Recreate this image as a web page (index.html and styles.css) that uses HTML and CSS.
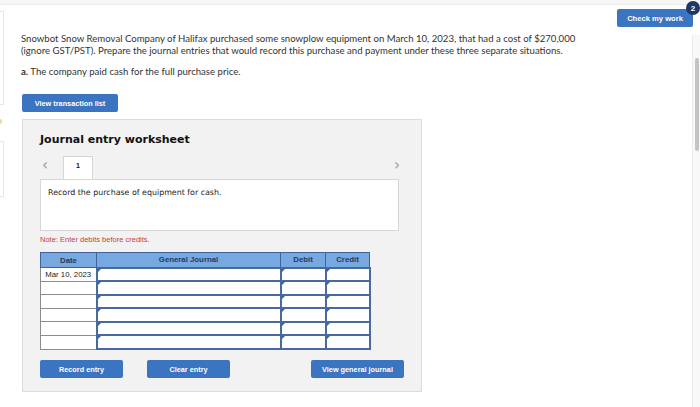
FILE: index.html
```html
<!DOCTYPE html>
<html>
<head>
<meta charset="utf-8">
<link rel="stylesheet" href="styles.css">
</head>
<body>
<div class="topbar"></div>
<div class="page">
  <div class="rail">
    <div class="rail-box one"></div>
    <div class="rail-dot"></div>
    <div class="rail-box two"></div>
  </div>
  <div class="main">
    <div class="head-row">
      <button class="check">Check my work<span class="badge">2</span></button>
    </div>
    <p class="q">Snowbot Snow Removal Company of Halifax purchased some snowplow equipment on March 10, 2023, that had a cost of $270,000 (ignore GST/PST). Prepare the journal entries that would record this purchase and payment under these three separate situations.</p>
    <p class="qa"><b>a.</b> The company paid cash for the full purchase price.</p>
    <button class="btn vtl">View transaction list</button>
    <div class="ws">
      <h2 class="ws-title">Journal entry worksheet</h2>
      <div class="tabs">
        <span class="arrow">&lsaquo;</span>
        <span class="tab">1</span>
        <span class="spacer"></span>
        <span class="arrow">&rsaquo;</span>
      </div>
      <div class="prompt">Record the purchase of equipment for cash.</div>
      <div class="note">Note: Enter debits before credits.</div>
      <table class="jt">
        <thead>
          <tr><th class="c-date">Date</th><th class="c-gj">General Journal</th><th class="c-dr">Debit</th><th class="c-cr">Credit</th></tr>
        </thead>
        <tbody>
          <tr><td class="date">Mar 10, 2023</td><td class="in"></td><td class="in"></td><td class="in"></td></tr>
          <tr><td class="date"></td><td class="in"></td><td class="in"></td><td class="in"></td></tr>
          <tr><td class="date"></td><td class="in"></td><td class="in"></td><td class="in"></td></tr>
          <tr><td class="date"></td><td class="in"></td><td class="in"></td><td class="in"></td></tr>
          <tr><td class="date"></td><td class="in"></td><td class="in"></td><td class="in"></td></tr>
          <tr><td class="date"></td><td class="in"></td><td class="in"></td><td class="in"></td></tr>
        </tbody>
      </table>
      <div class="actions">
        <button class="btn rec">Record entry</button>
        <button class="btn clr">Clear entry</button>
        <span class="spacer"></span>
        <button class="btn vgj">View general journal</button>
      </div>
    </div>
  </div>
  <div class="scroll"><div class="thumb"></div></div>
</div>
</body>
</html>
```

FILE: styles.css
```css
* { box-sizing: border-box; }
html, body { margin: 0; padding: 0; background: #fff; }
body { width: 700px; height: 407px; overflow: hidden; font-family: "Lato", "Liberation Sans", sans-serif; color: #333; }

.topbar { height: 5px; background: #f6f6f6; border-bottom: 1px solid #ececec; }

.page { display: flex; height: 402px; }

.rail { width: 4px; display: flex; flex-direction: column; }
.rail-box { border-right: 1px solid #e6e6e6; border-top: 1px solid #e6e6e6; border-bottom: 1px solid #e6e6e6; width: 4px; }
.rail-box.one { margin-top: 6px; height: 94px; }
.rail-dot { width: 2px; height: 5px; margin-top: 14px; background: #f3d98a; border-radius: 0 3px 3px 0; }
.rail-box.two { margin-top: 17px; height: 56px; }

.main { flex: 1; padding-left: 17px; position: relative; }

.head-row { display: flex; justify-content: flex-end; padding-top: 4px; margin-right: -1px; }
.check {
  position: relative; height: 18px; width: 76px; padding: 0; border: 0; border-radius: 2px;
  background: #3b74c0; color: #fff; font: bold 7.6px "Liberation Sans", Arial, sans-serif;
}
.badge {
  position: absolute; right: -7px; top: -8px; width: 14px; height: 14px; border-radius: 50%;
  background: #1c3866; color: #fff; font: bold 8px "Liberation Sans", Arial, sans-serif;
  display: flex; align-items: center; justify-content: center;
}

.q { margin: 6px 0 0; font-size: 9.6px; line-height: 11.5px; width: 562px; color: #333; }
.qa { margin: 10px 0 0; font-size: 9.6px; line-height: 12px; color: #333; }
.qa b { font-weight: 700; }

.btn {
  display: block; height: 18px; border: 0; border-radius: 2px; padding: 0;
  background: #3b74c0; color: #fff; font: bold 7.3px "Liberation Sans", Arial, sans-serif;
}
.vtl { width: 96px; margin: 16px 0 0 1px; }

.ws {
  margin: 7px 0 0 1px; width: 400px; height: 273px; background: #f2f2f2; border: 1px solid #dcdcdc;
  padding: 12px 17px 0 17px;
}
.ws-title { margin: 0; font: bold 11px "DejaVu Sans", Verdana, sans-serif; color: #111; line-height: 15px; }

.tabs { display: flex; align-items: flex-start; margin-top: 9px; height: 23px; width: 360px; }
.arrow { font: 15px "DejaVu Sans", sans-serif; color: #999; line-height: 16px; padding-top: 1px; }
.tabs .arrow:first-child { margin-left: 2px; }
.tab {
  margin-left: 15px; width: 30px; height: 23px; background: #fff; border: 1px solid #d6d6d6; border-bottom: 0;
  font: bold 7px "Liberation Sans", Arial, sans-serif; color: #111; text-align: center; padding-top: 5px;
  position: relative; z-index: 1; margin-bottom: -1px;
}
.spacer { flex: 1; }

.prompt {
  width: 359px; height: 52px; background: #fff; border: 1px solid #d6d6d6;
  font: 7.9px "DejaVu Sans", Verdana, sans-serif; color: #222; padding: 8px 0 0 7px;
}

.note { margin-top: 4px; font: 7.5px "Liberation Sans", Arial, sans-serif; color: #c4423a; line-height: 9px; }

.jt { margin-top: 8px; border-collapse: collapse; table-layout: fixed; width: 329px; }
.jt th {
  height: 15px; padding: 0; background: #78a8e0; border: 1px solid #3f6399;
  font: bold 7.8px "Liberation Sans", Arial, sans-serif; color: #213b63;
}
.c-date { width: 56px; }
.c-gj { width: 184px; }
.c-dr { width: 45px; }
.c-cr { width: 44px; }
.jt td { height: 13.6px; padding: 0; background: #fff; }
.jt td.date { border: 1px solid #8c8c8c; font: 7.8px "Liberation Sans", Arial, sans-serif; color: #222; text-align: center; }
.jt td.in { border: 2px solid #46699f; position: relative; }
.jt td.in::before {
  content: ""; position: absolute; left: 0; top: 0; width: 0; height: 0;
  border-top: 3px solid #3f6399; border-right: 3px solid transparent;
}

.actions { display: flex; margin-top: 10px; width: 364px; }
.rec { width: 83px; }
.clr { width: 83px; margin-left: 24px; }
.vgj { width: 93px; }

.scroll { width: 8px; margin-top: 30px; background: #f8f8f8; border-left: 1px solid #ececec; position: relative; }
.thumb { width: 4px; margin: 23px 0 0 2px; height: 93px; background: #c4c4c4; border-radius: 2px; }
```
